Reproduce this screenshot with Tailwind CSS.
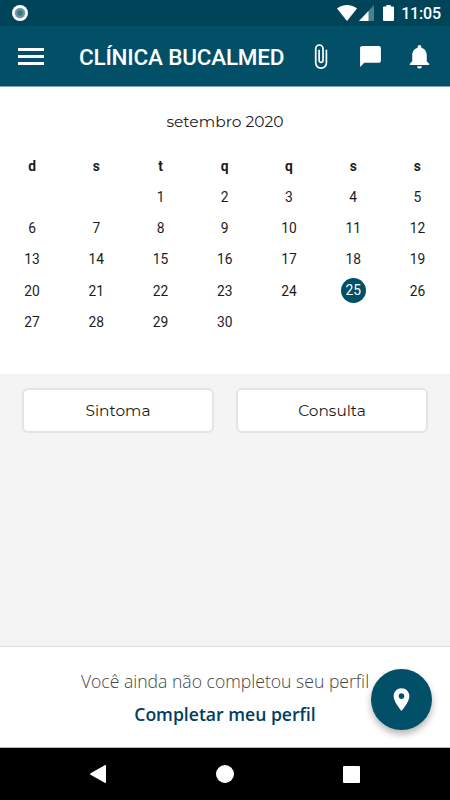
<!DOCTYPE html>
<html lang="pt-BR">

<head>
  <meta charset="UTF-8">
  <meta name="viewport" content="width=device-width, initial-scale=1.0">
  <script src="https://cdn.jsdelivr.net/npm/@tailwindcss/browser@4"></script>
  <title>Clínica Bucalmed</title>
</head>

<body class="bg-black">
  <div class="w-[450px] h-[800px] flex flex-col overflow-hidden font-['Roboto',sans-serif] text-[#1c1c1c]">

    <!-- status bar -->
    <div class="h-[26px] shrink-0 bg-[#00445a] flex items-center justify-between pl-3 pr-[9px] text-white">
      <svg class="size-4" viewBox="0 0 16 16">
        <circle cx="8" cy="8" r="8" fill="#fff" />
        <circle cx="8" cy="8" r="5.2" fill="#6d96a5" />
        <circle cx="8" cy="8" r="2.8" fill="#3f7386" />
      </svg>
      <div class="flex items-center">
        <svg class="w-5 h-4" viewBox="0 0 20 16" fill="#fff">
          <path d="M10 16L0 3.6C2.8 1.3 6.2 0 10 0s7.2 1.3 10 3.6z" />
        </svg>
        <svg class="w-[15px] h-4 ml-0.5" viewBox="0 0 15 16">
          <path d="M15 0v16H0z" fill="#4d7f91" />
          <path d="M9.5 5.9V16H0z" fill="#fff" />
        </svg>
        <svg class="w-[11px] h-4 ml-[9px]" viewBox="0 0 11 16" fill="#fff">
          <path d="M3.3 0h4.4v1.5H10a1 1 0 0 1 1 1V15a1 1 0 0 1-1 1H1a1 1 0 0 1-1-1V2.500a1 1 0 0 1 1-1h2.300z" />
        </svg>
        <span class="ml-[7px] text-base font-medium leading-none mt-0.5 tracking-[-0.15px]">11:05</span>
      </div>
    </div>

    <!-- app bar -->
    <header class="h-[61px] shrink-0 bg-[#015068] flex items-center pl-[18px] pr-4 text-white border-b border-[#7fa4b2]">
      <div class="flex flex-col gap-1 w-[26px] mt-px">
        <div class="h-[3px] bg-white"></div>
        <div class="h-[3px] bg-white"></div>
        <div class="h-[3px] bg-white"></div>
      </div>
      <h1 class="w-[227px] pl-[35px] mt-[3px] text-[22.500px] font-medium leading-none tracking-[-0.2px] whitespace-nowrap">CLÍNICA BUCALMED</h1>
      <div class="flex flex-1 items-center justify-between pl-[36px]">
        <svg class="size-[27px]" viewBox="0 0 24 24" fill="#fff">
          <path d="M16.500 6v11.500c0 2.210-1.790 4-4 4s-4-1.790-4-4V5c0-1.380 1.120-2.500 2.500-2.500s2.500 1.120 2.500 2.500v10.500c0 .55-.45 1-1 1s-1-.45-1-1V6H10v9.500c0 1.380 1.120 2.500 2.500 2.500s2.500-1.120 2.500-2.500V5c0-2.210-1.790-4-4-4S7 2.790 7 5v12.500c0 3.040 2.460 5.500 5.500 5.500s5.500-2.460 5.500-5.500V6h-1.500z" />
        </svg>
        <svg class="size-[25px] ml-0.5 mt-px" viewBox="0 0 24 24" fill="#fff">
          <path d="M20 2H4c-1.100 0-2 .9-2 2v18l4-4h14c1.100 0 2-.9 2-2V4c0-1.100-.9-2-2-2z" />
        </svg>
        <svg class="size-[29px]" viewBox="0 0 24 24" fill="#fff">
          <path d="M12 22c1.100 0 2-.9 2-2h-4c0 1.100.9 2 2 2zm6-6v-5c0-3.070-1.640-5.640-4.500-6.320V4c0-.83-.67-1.500-1.500-1.500s-1.500.67-1.500 1.500v.68C7.630 5.360 6 7.920 6 11v5l-2 2v1h16v-1l-2-2z" />
        </svg>
      </div>
    </header>

    <!-- calendar -->
    <section class="h-[287px] shrink-0 bg-white pt-[23px]">
      <h2 class="h-6 leading-6 text-center font-['Montserrat',sans-serif] text-[15.500px]">setembro 2020</h2>
      <div class="mt-[16.500px] w-[449.500px] grid grid-cols-7 auto-rows-[31.200px] items-center text-center text-[13.800px]" id="calendar">
        <div class="font-bold">d</div>
        <div class="font-bold">s</div>
        <div class="font-bold">t</div>
        <div class="font-bold">q</div>
        <div class="font-bold">q</div>
        <div class="font-bold">s</div>
        <div class="font-bold">s</div>
      </div>
    </section>

    <!-- actions -->
    <main class="flex-1 bg-[#f4f4f4] px-[22px] pt-[13.500px]">
      <div class="grid grid-cols-2 gap-[22px] font-['Montserrat',sans-serif] text-[15.400px]">
        <button class="h-[45px] pt-0.5 bg-white border-2 border-[#e4e4e4] rounded-md">Sintoma</button>
        <button class="h-[45px] pt-0.5 bg-white border-2 border-[#e4e4e4] rounded-md">Consulta</button>
      </div>
    </main>

    <!-- profile notice -->
    <footer class="relative h-[102px] shrink-0 bg-white border-t border-[#dedede] border-b border-b-[#b5b5b5] pt-[21px] text-center font-['Open_Sans',sans-serif]">
      <p class="text-[17.600px] leading-[26px] font-light text-[#444]">Você ainda não completou seu perfil</p>
      <a href="#" class="block mt-[7px] text-[17.600px] leading-[26px] font-semibold text-[#003d63]">Completar meu perfil</a>
      <button class="absolute right-[18px] top-[22px] size-[61px] rounded-full bg-[#015068] shadow-[0_4px_7px_rgba(0,0,0,0.3)] flex items-center justify-center">
        <svg class="size-[27px]" viewBox="0 0 24 24" fill="#fff">
          <path d="M12 2C8.130 2 5 5.130 5 9c0 5.250 7 13 7 13s7-7.750 7-13c0-3.870-3.130-7-7-7zm0 9.500c-1.380 0-2.500-1.120-2.500-2.500s1.120-2.500 2.500-2.500 2.500 1.120 2.500 2.500-1.120 2.500-2.500 2.500z" />
        </svg>
      </button>
    </footer>

    <!-- system navigation -->
    <nav class="h-[52px] shrink-0 bg-black flex items-center justify-between px-[90px]">
      <svg class="w-4 h-[18px]" viewBox="0 0 16 18" fill="#fff">
        <path d="M.5 8.300L15.200 0q.8-.2.8.7v16.600q0 .9-.8.7L.5 9.700q-.8-.7 0-1.400z" />
      </svg>
      <div class="size-[18px] rounded-full bg-white"></div>
      <div class="size-[17px] rounded-[1px] bg-white"></div>
    </nav>
  </div>

  <script>
    const calendar = document.getElementById('calendar')
    const today = 25

    // the month starts on a tuesday
    for (let i = 0; i < 2; i++) {
      calendar.appendChild(document.createElement('div'))
    }

    for (let day = 1; day <= 30; day++) {
      const cell = document.createElement('div')
      cell.textContent = day
      if (day === today) {
        cell.className = 'size-[25px] leading-[25px] mx-auto rounded-full bg-[#015068] text-white'
      }
      calendar.appendChild(cell)
    }
  </script>
</body>

</html>
